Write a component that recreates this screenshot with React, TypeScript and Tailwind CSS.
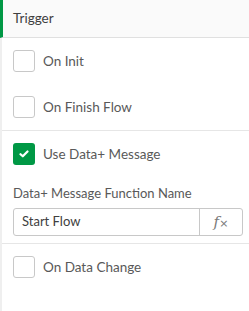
import React from "react";

function Box({ checked = false }: { checked?: boolean }) {
  if (checked) {
    return (
      <div className="w-[22px] h-[22px] rounded-[3px] bg-[#009845] flex items-center justify-center shrink-0">
        <svg width="10" height="8" viewBox="0 0 10 8">
          <path d="M1.5 4.2 L3.8 6.3 L8.5 1.5" stroke="#fff" strokeWidth="2.2" fill="none" strokeLinecap="round" strokeLinejoin="round" />
        </svg>
      </div>
    );
  }
  return <div className="w-[22px] h-[22px] rounded-[3px] border border-[#c8c8c8] bg-white shrink-0" />;
}

function Row({ label, checked }: { label: string; checked?: boolean }) {
  return (
    <div className="h-[46px] flex items-center pl-[11px] gap-[8px]">
      <Box checked={checked} />
      <span className="text-[13.5px] text-[#595959]">{label}</span>
    </div>
  );
}

export default function App() {
  return (
    <div
      className="w-[249px] h-[311px] bg-white flex flex-col border-l-[2px] border-[#efefef]"
      style={{ fontFamily: '"Lato", "Liberation Sans", sans-serif' }}
    >
      <div className="h-[38px] bg-[#fafafa] border-b border-[#e0e0e0] flex items-center pl-[10px] -ml-[2px] border-l-[3px] border-l-[#009845] shrink-0">
        <span className="text-[13.5px] text-[#404040]">Trigger</span>
      </div>
      <div className="border-b border-[#e6e6e6]">
        <Row label="On Init" />
        <Row label="On Finish Flow" />
      </div>
      <div className="border-b border-[#e6e6e6] pb-[7px]">
        <Row label="Use Data+ Message" checked />
        <div className="pl-[11px] pr-[6px]">
          <div className="text-[13px] text-[#595959] leading-[18px] mt-[7px]">Data+ Message Function Name</div>
          <div className="mt-[6px] h-[28px] flex border border-[#c8c8c8] rounded-[3px]">
            <div className="flex-1 flex items-center pl-[8px] text-[13px] text-[#404040]">Start Flow</div>
            <div className="w-[43px] border-l border-[#c8c8c8] flex items-center justify-center">
              <span className="text-[15px] text-[#7a7a7a] italic" style={{ fontFamily: '"DejaVu Serif", serif' }}>
                f<span className="text-[11px] not-italic" style={{ fontFamily: '"DejaVu Sans", sans-serif' }}>×</span>
              </span>
            </div>
          </div>
        </div>
      </div>
      <Row label="On Data Change" />
    </div>
  );
}
